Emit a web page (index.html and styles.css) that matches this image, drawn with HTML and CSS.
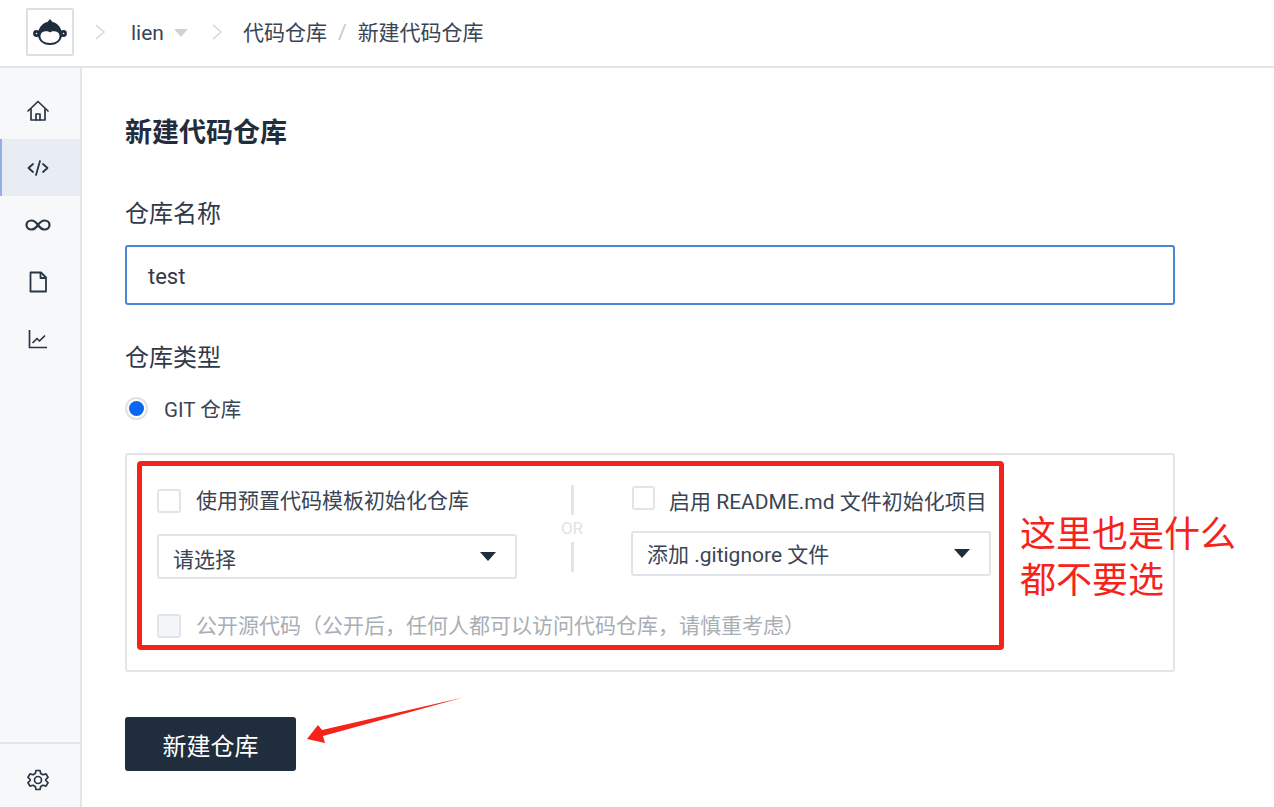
FILE: index.html
```html
<!DOCTYPE html>
<html lang="zh-CN">
<head>
<meta charset="utf-8">
<title>新建代码仓库</title>
<link rel="stylesheet" href="styles.css">
</head>
<body>
<div class="app">
  <header class="topbar">
    <a class="logo">
      <svg width="36" height="30" viewBox="0 0 36 30">
        <circle cx="4.5" cy="16.5" r="3.4" fill="#1f2d3d"/>
        <circle cx="31.5" cy="16.5" r="3.4" fill="#1f2d3d"/>
        <circle cx="4.5" cy="16.5" r=".8" fill="#fff"/>
        <circle cx="31.5" cy="16.5" r=".8" fill="#fff"/>
        <path d="M18 2 L20.500 5 C26 6 29.500 11 30 17 C30.500 23 25.500 28 18 28 C10.500 28 5.500 23 6 17 C6.500 11 10 6 15.500 5 Z" fill="#1f2d3d"/>
        <path d="M18 15.500 C20 13.500 27 13.500 27.500 18.500 C28 23 24 26 18 26 C12 26 8 23 8.500 18.500 C9 13.500 16 13.500 18 15.500 Z" fill="#fff"/>
      </svg>
    </a>
    <svg class="chev first" width="12" height="18" viewBox="0 0 12 18"><path d="M2 2 L10 9 L2 16" fill="none" stroke="#d5d8dc" stroke-width="1.600"/></svg>
    <span class="crumb">lien</span>
    <svg class="caret" width="14" height="8" viewBox="0 0 14 8"><path d="M0 0 H14 L7 8 Z" fill="#cfd3d8"/></svg>
    <svg class="chev second" width="12" height="18" viewBox="0 0 12 18"><path d="M2 2 L10 9 L2 16" fill="none" stroke="#d5d8dc" stroke-width="1.600"/></svg>
    <span class="crumb">代码仓库</span>
    <span class="slash">/</span>
    <span class="crumb">新建代码仓库</span>
  </header>
  <div class="body-row">
    <nav class="sidebar">
      <div class="nav-list">
        <a class="nav-item">
          <svg width="24" height="24" viewBox="0 0 24 24" fill="none" stroke="#2a3544" stroke-width="1.700" stroke-linejoin="round" stroke-linecap="round"><path d="M2 12 L12 2.500 L22 12"/><path d="M5 10 V21 H19 V10"/><path d="M10 21 V15 H14 V21"/></svg>
        </a>
        <a class="nav-item active">
          <svg width="24" height="24" viewBox="0 0 24 24" fill="none" stroke="#2a3544" stroke-width="1.800" stroke-linecap="round" stroke-linejoin="round"><path d="M7 8 L2.500 12 L7 16"/><path d="M17 8 L21.500 12 L17 16"/><path d="M14 5 L10 19"/></svg>
        </a>
        <a class="nav-item">
          <svg width="26" height="24" viewBox="0 0 26 24" fill="none" stroke="#2a3544" stroke-width="2.200"><path d="M13 12 C10.500 8.500 8.500 7.500 6.500 7.500 C3.500 7.500 1.500 9.500 1.500 12 C1.500 14.500 3.500 16.500 6.500 16.500 C8.500 16.500 10.500 15.500 13 12 C15.500 8.500 17.500 7.500 19.500 7.500 C22.500 7.500 24.500 9.500 24.500 12 C24.500 14.500 22.500 16.500 19.500 16.500 C17.500 16.500 15.500 15.500 13 12 Z"/></svg>
        </a>
        <a class="nav-item">
          <svg width="24" height="24" viewBox="0 0 24 24" fill="none" stroke="#2a3544" stroke-width="1.800" stroke-linejoin="round"><path d="M4.500 2.500 H15 L20 7.500 V21.500 H4.500 Z"/><path d="M14.500 2.500 V8 H20" /></svg>
        </a>
        <a class="nav-item">
          <svg width="24" height="24" viewBox="0 0 24 24" fill="none" stroke="#2a3544" stroke-width="1.700" stroke-linejoin="round"><path d="M3.500 3 V20.500 H21"/><path d="M6.500 16 L11 11.500 L13.500 14 L19 8.500"/></svg>
        </a>
      </div>
      <div class="nav-foot">
        <svg width="24" height="24" viewBox="0 0 24 24" fill="none" stroke="#2a3544" stroke-width="1.700" stroke-linejoin="round"><path d="M10 2.500 H14 L14.700 5.500 L17 6.800 L20 5.900 L22 9.300 L19.800 11.500 V12.500 L22 14.700 L20 18.100 L17 17.200 L14.700 18.500 L14 21.500 H10 L9.300 18.500 L7 17.200 L4 18.100 L2 14.700 L4.200 12.500 V11.500 L2 9.300 L4 5.900 L7 6.800 L9.300 5.500 Z"/><circle cx="12" cy="12" r="3.500"/></svg>
      </div>
    </nav>
    <main class="main">
      <h1 class="title">新建代码仓库</h1>
      <div class="label name-label">仓库名称</div>
      <div class="input">test</div>
      <div class="label type-label">仓库类型</div>
      <div class="radio-row"><span class="radio"><span class="radio-dot"></span></span><span>GIT 仓库</span></div>
      <section class="panel">
        <div class="columns">
          <div class="col col-left">
            <div class="check-row"><span class="checkbox"></span><span class="txt-up">使用预置代码模板初始化仓库</span></div>
            <div class="select"><span class="select-left">请选择</span><span class="select-caret"></span></div>
          </div>
          <div class="or"><span class="or-line"></span><span class="or-text">OR</span><span class="or-line"></span></div>
          <div class="col col-right">
            <div class="check-row"><span class="checkbox narrow"></span><span class="txt-down">启用 README.md 文件初始化项目</span></div>
            <div class="select"><span class="select-right">添加 .gitignore 文件</span><span class="select-caret"></span></div>
          </div>
        </div>
        <div class="check-row disabled"><span class="checkbox off"></span><span class="txt-up">公开源代码（公开后，任何人都可以访问代码仓库，请慎重考虑）</span></div>
      </section>
      <button class="submit" type="button">新建仓库</button>
    </main>
  </div>
  <div class="redbox"></div>
  <div class="note">这里也是什么<br>都不要选</div>
  <svg class="arrow" width="158" height="50" viewBox="0 0 158 50"><path d="M157 0.500 L17 39 L19 46 L1 42 L12 28 L16 33 Z" fill="#f5231a"/></svg>
</div>
</body>
</html>
```

FILE: styles.css
```css
* { box-sizing: border-box; }
html, body { margin: 0; height: 100%; overflow: hidden; background: #fff; }
body {
  font-family: Roboto, "Noto Sans CJK SC", sans-serif;
  color: #2f3a4a;
  font-size: 21px;
}
.app { position: relative; height: 807px; display: flex; flex-direction: column; }

.topbar {
  height: 68px;
  flex: none;
  display: flex;
  align-items: center;
  border-bottom: 2px solid #e3e5e8;
  padding-left: 26px;
  padding-bottom: 3px;
}
.logo {
  width: 48px; height: 48px;
  border: 2px solid #dcdfe3;
  border-radius: 2px;
  display: flex; align-items: center; justify-content: center;
}
.chev.first { margin-left: 20px; margin-right: 25px; }
.chev.second { margin-left: 23px; margin-right: 20px; }
.crumb { line-height: 30px; font-size: 21px; color: #3a4554; padding-top: 2px; }
.caret { margin-left: 10px; margin-top: 2px; }
.slash { color: #c5c9ce; margin: 0 11px; font-size: 21px; }

.body-row { flex: 1; display: flex; min-height: 0; }

.sidebar {
  width: 82px;
  flex: none;
  background: #f6f8fa;
  border-right: 2px solid #e3e5e8;
  display: flex; flex-direction: column; justify-content: space-between;
}
.nav-list { padding-top: 14px; }
.nav-item {
  height: 57px;
  display: flex; align-items: center; justify-content: center;
  border-left: 2px solid transparent;
  padding-right: 6px;
}
.nav-item.active { background: #e8ecf3; border-left-color: #93aee8; }
.nav-foot {
  height: 65px;
  border-top: 2px solid #e3e5e8;
  display: flex; align-items: center; justify-content: center;
  padding: 8px 4px 0 0;
}

.main { flex: 1; padding: 46px 0 0 43px; }
.title { margin: 0; font-size: 27px; line-height: 38px; font-weight: 700; color: #1f2d3d; }
.label { font-size: 24px; line-height: 34px; color: #2f3a4a; }
.name-label { margin-top: 45px; }
.input {
  margin-top: 14px;
  width: 1050px; height: 60px;
  border: 2px solid #4a86d6;
  border-radius: 3px;
  padding-left: 21px;
  font-size: 22px; line-height: 60px;
  color: #2f3a4a;
}
.type-label { margin-top: 36px; }
.radio-row {
  margin-top: 20px;
  height: 26px;
  display: flex; align-items: center; gap: 16px;
  font-size: 20.500px; color: #3a4554;
}
.radio {
  width: 23px; height: 23px;
  border: 2px solid #dfe2e6; border-radius: 50%;
  display: flex; align-items: center; justify-content: center;
}
.radio-dot { width: 15px; height: 15px; border-radius: 50%; background: #0a66f0; }

.panel {
  margin-top: 32px;
  width: 1050px; height: 219px;
  border: 2px solid #e3e5e8;
  border-radius: 3px;
  padding: 0 0 0 30px;
}
.columns { display: flex; height: 159px; }
.col { width: 360px; flex: none; }
.col-left { padding-top: 34px; }
.col-right { padding-top: 31px; }
.or {
  width: 114px;
  padding: 30px 4px 0 0;
  display: flex; flex-direction: column; align-items: center;
}
.or-line { width: 3px; height: 30px; background: #e3e5e8; }
.or-text { font-size: 17px; line-height: 27px; color: #dfe2e6; }
.check-row { display: flex; align-items: center; height: 24px; gap: 15px; font-size: 21px; white-space: nowrap; color: #3a4554; }
.col-right .check-row { gap: 14px; }
.txt-up { margin-top: -4px; }
.txt-down { margin-top: 4px; }
.checkbox {
  width: 24px; height: 24px; flex: none;
  border: 2px solid #e1e4e8; border-radius: 3px; background: #fff;
}
.checkbox.narrow { width: 23px; margin-left: 1px; }
.checkbox.off { background: #f3f5f8; }
.disabled { color: #a9aeb5; }
.select {
  margin-top: 21px;
  width: 360px; height: 45px;
  border: 2px solid #e1e4e8; border-radius: 3px;
  display: flex; align-items: center; justify-content: space-between;
  padding: 0 19px 0 14px;
  font-size: 21px; color: #3a4554;
}
.select-left { padding-top: 2px; }
.select-right { padding-bottom: 2px; }
.select-caret {
  width: 0; height: 0;
  border-left: 8px solid transparent;
  border-right: 8px solid transparent;
  border-top: 9px solid #1f2d3d;
}

.submit {
  display: block;
  margin-top: 45px;
  width: 171px; height: 54px;
  background: #1f2d3d; color: #fff;
  border: 0; border-radius: 3px;
  font-family: inherit; font-size: 24px;
  padding: 0;
}

.redbox {
  position: absolute; left: 137px; top: 461px;
  width: 867px; height: 189px;
  border: 5px solid #f5231a; border-radius: 4px;
}
.note {
  position: absolute; left: 1020px; top: 512px;
  font-size: 36px; line-height: 46px; color: #f5231a;
  white-space: nowrap;
}
.arrow { position: absolute; left: 306px; top: 697px; }
```
